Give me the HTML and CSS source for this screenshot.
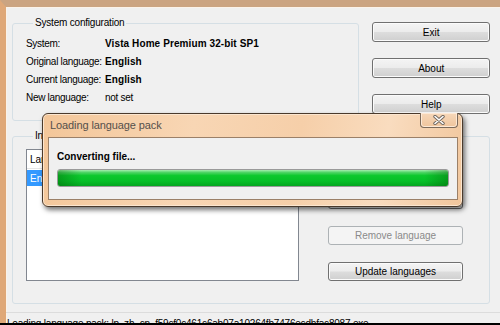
FILE: index.html
```html
<!DOCTYPE html>
<html lang="en">
<head>
  <meta charset="UTF-8">
  <title>Language pack installer</title>
  <link rel="stylesheet" href="styles.css">
</head>
<body>
  <div class="window">
    <div class="client">

      <div class="top-row">
        <fieldset class="group sys-group">
          <legend>System configuration</legend>
          <div class="info-grid">
            <span class="label">System:</span><span class="value strong">Vista Home Premium 32-bit SP1</span>
            <span class="label">Original language:</span><span class="value strong">English</span>
            <span class="label">Current language:</span><span class="value strong">English</span>
            <span class="label">New language:</span><span class="value">not set</span>
          </div>
        </fieldset>

        <div class="side-buttons">
          <button class="btn">Exit</button>
          <button class="btn">About</button>
          <button class="btn">Help</button>
        </div>
      </div>

      <fieldset class="group lang-group">
        <legend>Installed languages</legend>
        <div class="lang-body">
          <div class="listbox">
            <div class="list-header"><span class="col">Language</span><span class="col">Version</span></div>
            <div class="list-row selected"><span class="col">English</span><span class="col">6.0</span></div>
          </div>
          <div class="lang-buttons">
            <button class="btn">Install language</button>
            <button class="btn" disabled>Remove language</button>
            <button class="btn">Update languages</button>
          </div>
        </div>
      </fieldset>

      <div class="status">Loading language pack: lp_zh_cn_f59cf0c461c6ab07a10264fb7476ecdbfac8087.exe</div>
    </div>

    <!-- progress dialog over the main window -->
    <div class="dialog">
      <div class="dialog-title">
        <span class="title-text">Loading language pack</span>
        <button class="close-btn">
          <svg width="14" height="10" viewBox="0 0 14 10">
            <path d="M3 1.5 L11 8.5 M11 1.5 L3 8.5" stroke="#6f655c" stroke-width="3.4" stroke-linecap="round"/>
            <path d="M3 1.5 L11 8.5 M11 1.5 L3 8.5" stroke="#ffffff" stroke-width="1.6" stroke-linecap="round"/>
          </svg>
        </button>
      </div>
      <div class="dialog-body">
        <p class="dialog-msg">Converting file...</p>
        <div class="progress"><div class="progress-fill"></div></div>
      </div>
    </div>
  </div>
</body>
</html>
```

FILE: styles.css
```css
body {
  margin: 0;
  width: 500px;
  height: 325px;
  overflow: hidden;
  background: #000;
  font-family: "Liberation Sans", Arial, sans-serif;
  font-size: 10px;
  color: #000;
}

.window {
  position: relative;
  height: 316px;
  overflow: hidden;
  background: #f0f0f0;
  border-left: 6px solid #dfa878;
  border-top: 7px solid #cba481;
  box-shadow: inset 1px 1px 0 #fbf3ea;
}

.client {
  display: flex;
  flex-direction: column;
  padding: 10px 10px 0 6px;
}

.top-row {
  display: flex;
  gap: 13px;
}

.group {
  margin: 0;
  border: 1px solid #d5dfe5;
  border-radius: 3px;
  padding: 0;
}

.group legend {
  padding: 0 2px;
  margin-left: 7px;
  line-height: 12px;
  letter-spacing: -0.2px;
}

.sys-group {
  width: 342px;
  padding: 5px 0 14px 13px;
}

.info-grid {
  display: grid;
  grid-template-columns: 79px auto;
  grid-auto-rows: 18px;
  align-items: center;
}

.label, .value {
  letter-spacing: -0.3px;
  white-space: nowrap;
}

.strong {
  font-weight: bold;
  letter-spacing: 0.1px;
}

.side-buttons {
  display: flex;
  flex-direction: column;
  gap: 16px;
  width: 121px;
  padding-top: 5px;
}

.btn {
  height: 20px;
  padding: 0;
  font-family: inherit;
  font-size: 10px;
  color: #000;
  border: 1px solid #707070;
  border-radius: 3px;
  background: linear-gradient(#f4f4f4 0%, #ececec 48%, #dddddd 52%, #cfcfcf 100%);
  box-shadow: inset 0 0 0 1px #fbfbfb;
}

.btn:disabled {
  color: #8a8a8a;
  border-color: #adb2b5;
  background: #f4f4f4;
  box-shadow: none;
}

.lang-group {
  margin-top: 9px;
  padding: 7px 0 22px 13px;
}

.lang-body {
  display: flex;
  gap: 29px;
}

.listbox {
  width: 271px;
  height: 130px;
  border: 1px solid #828790;
  background: #fff;
}

.list-header, .list-row {
  display: flex;
  height: 18px;
  align-items: center;
}

.list-header {
  border-bottom: 1px solid #e5e5e5;
}

.col {
  width: 80px;
  padding-left: 3px;
}

.list-row {
  margin-top: 1px;
  height: 16px;
}

.list-row.selected {
  background: #3399ff;
  color: #fff;
}

.lang-buttons {
  display: flex;
  flex-direction: column;
  justify-content: flex-end;
  gap: 17px;
  width: 135px;
}

.lang-buttons .btn {
  height: 19px;
}

.status {
  margin-top: 8px;
  border-top: 1px solid #dcdcdc;
  padding: 5px 0 0 1px;
  margin-left: -6px;
  margin-right: -10px;
  white-space: nowrap;
  line-height: 12px;
  letter-spacing: -0.2px;
}

/* progress dialog */
.dialog {
  position: absolute;
  left: 36px;
  top: 106px;
  width: 419px;
  height: 92px;
  display: flex;
  flex-direction: column;
  border: 1px solid #4a3a2c;
  border-radius: 6px;
  background: linear-gradient(100deg, #f3c699 0%, #f8d6b4 35%, #f6cfa9 60%, #f9dcbf 80%, #f1c69c 100%);
  box-shadow: 2px 3px 5px rgba(0, 0, 0, 0.55), inset 0 0 0 1px #fbe6d0;
}

.dialog-title {
  display: flex;
  height: 23px;
}

.title-text {
  padding: 5px 0 0 7px;
  font-size: 11px;
  color: #55504b;
  letter-spacing: -0.1px;
}

.close-btn {
  margin-left: auto;
  margin-right: 4px;
  margin-top: -1px;
  width: 38px;
  height: 15px;
  padding: 0;
  border: 1px solid #7c6a5a;
  border-top: none;
  border-radius: 0 0 4px 4px;
  background: linear-gradient(#f6d7b9, #efc59d);
  box-shadow: inset 0 0 0 1px #fde9d6;
  display: flex;
  align-items: center;
  justify-content: center;
}

.dialog-body {
  flex: 1;
  margin: 0 4px 6px 5px;
  border: 1px solid #9b8068;
  background: #f0f0f0;
  padding: 12px 8px 0 8px;
}

.dialog-msg {
  margin: 0;
  font-weight: bold;
  line-height: 13px;
}

.progress {
  margin-top: 6px;
  height: 16px;
  border: 1px solid #9a9a9a;
  border-radius: 3px;
  background: #e6e6e6;
  overflow: hidden;
}

.progress-fill {
  height: 100%;
  background:
    linear-gradient(90deg, rgba(0, 80, 0, 0.35) 0%, rgba(0, 0, 0, 0) 6%, rgba(0, 0, 0, 0) 94%, rgba(0, 80, 0, 0.35) 100%),
    linear-gradient(#a6eeb0 0%, #4fd566 15%, #0cc82d 35%, #06bf28 70%, #04a620 100%);
}
```
